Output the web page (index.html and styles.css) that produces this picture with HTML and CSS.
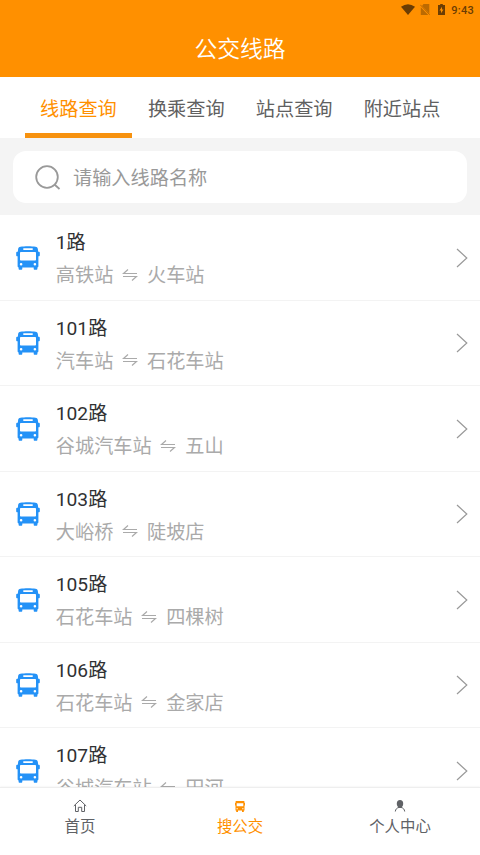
FILE: index.html
```html
<!DOCTYPE html>
<html lang="zh-CN">
<head>
<meta charset="utf-8">
<title>公交线路</title>
<link rel="stylesheet" href="styles.css">
</head>
<body>
<svg width="0" height="0" class="defs">
  <symbol id="bus" viewBox="0 0 24 24">
    <path fill="currentColor" fill-rule="evenodd" d="M4.500.8C8 .1 16 .1 19.500.8c1.600.3 2.200 1.100 2.400 2.500l.3 2.500h.7c.6 0 .9.300.9.900v2.500c0 .7-.4 1.100-1.100 1.100h-.3V20c0 .8-.3 1.200-1 1.400v1.300c0 .6-.4 1.100-1 1.100h-1.700c-.6 0-1-.5-1-1.100v-1.300H6.300v1.300c0 .6-.4 1.100-1 1.100H3.600c-.6 0-1-.5-1-1.100v-1.300c-.7-.2-1-.6-1-1.400v-9.700h-.3C.6 10.300.2 9.900.2 9.200V6.700c0-.6.3-.9.900-.9h.7l.3-2.500C2.300 1.900 2.900 1.100 4.500.8ZM7.300 2.300v1.700h9.400V2.300ZM4.800 6c-.5 0-.8.300-.8.800v7c0 .5.300.8.800.8h14.400c.5 0 .8-.3.800-.8v-7c0-.5-.3-.8-.8-.8ZM5.100 16.900a1.300 1.300 0 1 0 0 2.600 1.300 1.300 0 0 0 0-2.600Zm13.800 0a1.300 1.300 0 1 0 0 2.600 1.300 1.300 0 0 0 0-2.600Z"/>
  </symbol>
  <symbol id="swap" viewBox="0 0 16 12">
    <path fill="none" stroke="currentColor" stroke-width="1.200" d="M6 .5 1.500 4.500H15M1 7.500h13.500l-4.500 4"/>
  </symbol>
  <symbol id="next" viewBox="0 0 12 20">
    <path fill="none" stroke="currentColor" stroke-width="1.200" d="m1 1 9.800 9L1 19"/>
  </symbol>
</svg>
<div class="app">
  <header class="header">
    <div class="status">
      <svg class="wifi" viewBox="0 0 14 11"><path d="M0 2.800Q7-2.400 14 2.800L7 11Z"/></svg>
      <svg class="sim" viewBox="0 0 10 11"><path d="M3.500 0H9.300V9.500L2 2ZM.8 3.200 8.300 11H.8Z"/><path class="slash" d="m.3.8 9.400 9.900"/></svg>
      <svg class="battery" viewBox="0 0 7 11"><path fill-rule="evenodd" d="M2.200 0h2.600v1H7v10H0V1h2.200ZM4 2.700 1.500 6.500H3V9.300L5.500 5.400H4Z"/></svg>
      <span class="clock">9:43</span>
    </div>
    <h1 class="title">公交线路</h1>
  </header>
  <nav class="tabs">
    <a class="tab active">线路查询</a>
    <a class="tab">换乘查询</a>
    <a class="tab">站点查询</a>
    <a class="tab">附近站点</a>
  </nav>
  <div class="search">
    <div class="field">
      <svg class="lens" viewBox="0 0 26 26"><circle cx="12" cy="12" r="10.800"/><path d="m19.500 19.500 5 4.500"/></svg>
      <span>请输入线路名称</span>
    </div>
  </div>
  <main class="list">
    <div class="row"><svg class="bus"><use href="#bus"/></svg><div class="info"><div class="name">1路</div><div class="route">高铁站<svg class="swap"><use href="#swap"/></svg>火车站</div></div><svg class="next"><use href="#next"/></svg></div>
    <div class="row"><svg class="bus"><use href="#bus"/></svg><div class="info"><div class="name">101路</div><div class="route">汽车站<svg class="swap"><use href="#swap"/></svg>石花车站</div></div><svg class="next"><use href="#next"/></svg></div>
    <div class="row"><svg class="bus"><use href="#bus"/></svg><div class="info"><div class="name">102路</div><div class="route">谷城汽车站<svg class="swap"><use href="#swap"/></svg>五山</div></div><svg class="next"><use href="#next"/></svg></div>
    <div class="row"><svg class="bus"><use href="#bus"/></svg><div class="info"><div class="name">103路</div><div class="route">大峪桥<svg class="swap"><use href="#swap"/></svg>陡坡店</div></div><svg class="next"><use href="#next"/></svg></div>
    <div class="row"><svg class="bus"><use href="#bus"/></svg><div class="info"><div class="name">105路</div><div class="route">石花车站<svg class="swap"><use href="#swap"/></svg>四棵树</div></div><svg class="next"><use href="#next"/></svg></div>
    <div class="row"><svg class="bus"><use href="#bus"/></svg><div class="info"><div class="name">106路</div><div class="route">石花车站<svg class="swap"><use href="#swap"/></svg>金家店</div></div><svg class="next"><use href="#next"/></svg></div>
    <div class="row"><svg class="bus"><use href="#bus"/></svg><div class="info"><div class="name">107路</div><div class="route">谷城汽车站<svg class="swap"><use href="#swap"/></svg>田河</div></div><svg class="next"><use href="#next"/></svg></div>
  </main>
  <footer class="tabbar">
    <a class="item"><svg class="glyph" viewBox="0 0 14 14"><path class="line" d="M.8 7 7 1l6.200 6M2.500 5.800v6.700h2.800V8.300h3.400v4.200h2.800V5.800"/></svg><span>首页</span></a>
    <a class="item active"><svg class="glyph small" viewBox="0 0 10 11"><path fill="currentColor" fill-rule="evenodd" d="M1.200 0h7.600q.7 0 .7.800V2H10v2.500h-.5v5H8.800V11H7V9.500H3V11H1.200V9.500H.5v-5H0V2h.5V.8Q.5 0 1.200 0ZM1.700 2.300v3h6.600v-3ZM1.500 7.200v1h1.300v-1Zm5.700 0v1h1.300v-1Z"/></svg><span>搜公交</span></a>
    <a class="item"><svg class="glyph" viewBox="0 0 14 14"><ellipse cx="7" cy="4.700" rx="3.200" ry="3.700" fill="currentColor"/><path fill="currentColor" d="M5.700 7h2.600v2H5.700Z"/><path class="line" d="M2.300 12.500c.2-2.300 1.700-3.700 3.700-4.100M11.700 12.500c-.2-2.300-1.700-3.700-3.700-4.100"/></svg><span>个人中心</span></a>
  </footer>
</div>
</body>
</html>
```

FILE: styles.css
```css
* { box-sizing: border-box; }

body {
  margin: 0;
  font-family: Roboto, "Noto Sans CJK SC", sans-serif;
  background: #fff;
}

svg { display: block; flex: none; }

.defs { position: absolute; }

.app {
  display: flex;
  flex-direction: column;
  width: 480px;
  height: 855px;
  overflow: hidden;
}

.header {
  flex: none;
  height: 77px;
  background: #ff9000;
}

.status {
  display: flex;
  align-items: center;
  justify-content: flex-end;
  height: 19px;
  padding-right: 6px;
  color: #6b3d04;
}

.status svg { fill: currentColor; }
.wifi { width: 14px; height: 11px; margin-right: 5px; }
.sim { width: 10px; height: 11px; margin-right: 8px; opacity: .45; }
.slash { stroke: #6b3d04; stroke-width: 1; }
.battery { width: 7px; height: 11px; margin-right: 6px; }

.clock {
  font-size: 11px;
  font-weight: 500;
  line-height: 19px;
  letter-spacing: .3px;
  padding-top: 1px;
}

.title {
  margin: 0;
  font-size: 22.8px;
  font-weight: 350;
  line-height: 62px;
  text-align: center;
  color: #fff;
}

.tabs {
  flex: none;
  display: flex;
  height: 61px;
  padding: 0 24px 0 24.500px;
}

.tab {
  flex: 1;
  height: 61px;
  text-align: center;
  font-size: 19.2px;
  line-height: 66px;
  color: #606060;
}

.tab.active {
  color: #ff9000;
  border-bottom: 5px solid #f7920f;
}

.search {
  flex: none;
  height: 77px;
  padding: 13px;
  background: #f4f4f4;
}

.field {
  display: flex;
  align-items: center;
  height: 52px;
  padding-left: 22px;
  border-radius: 13px;
  background: #fff;
  color: #999;
  font-size: 19.2px;
}

.lens {
  width: 26px;
  height: 26px;
  margin: 1px 12px 0 0;
  fill: none;
  stroke: #999;
  stroke-width: 1.8;
}

.list {
  flex: 1;
  min-height: 0;
  overflow: hidden;
}

.row {
  display: flex;
  align-items: center;
  height: 85.5px;
  padding: 0 12px 0 16px;
  border-bottom: 1px solid #f3f3f3;
}

.bus { width: 24px; height: 24px; margin-top: 1px; color: #2492f7; }

.info {
  flex: 1;
  padding: 5px 0 0 15.800px;
  font-size: 19.2px;
  line-height: 32px;
}

.name { color: #303133; }

.route {
  display: flex;
  align-items: center;
  padding-top: 1px;
  color: #aaa;
}

.swap { width: 16px; height: 12px; margin: -3px 9px 0 8.600px; }

.next { width: 12px; height: 20px; margin-top: 1px; color: #999; }

.tabbar {
  flex: none;
  display: flex;
  height: 68px;
  border-top: 1px solid #eee;
  background: #fff;
  box-shadow: 0 0 2px rgba(0, 0, 0, .08);
}

.item {
  flex: 1;
  display: flex;
  flex-direction: column;
  align-items: center;
  padding-top: 11px;
  font-size: 15.4px;
  line-height: 24px;
  color: #606266;
}

.item.active { color: #ff9000; }

.glyph { width: 14px; height: 14px; margin-bottom: 2px; }
.glyph.small { width: 10px; height: 11px; margin: 2px 0 3px; }
.line { fill: none; stroke: currentColor; stroke-width: 1; }
```
